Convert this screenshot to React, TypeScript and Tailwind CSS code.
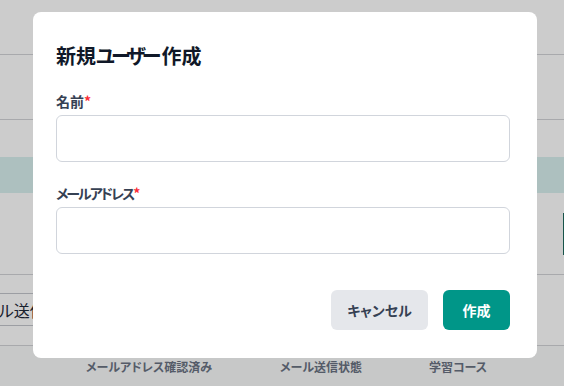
import React from 'react';

const FONT = "font-['Noto_Sans_CJK_JP','Noto_Sans',sans-serif] [font-feature-settings:'palt']";

function Field({ label, className = '', labelClass = '' }: { label: string; className?: string; labelClass?: string }) {
  return (
    <div className={className}>
      <label className="mb-1 block text-sm leading-5 font-semibold text-gray-700">
        <span className={labelClass}>{label}</span>
        <span className="text-red-500">*</span>
      </label>
      <input
        type="text"
        className="block h-[47px] w-full rounded-md border border-gray-300 bg-white px-3 text-sm outline-none"
      />
    </div>
  );
}

export default function App() {
  return (
    <div className={`relative h-[386px] w-[564px] overflow-hidden bg-white ${FONT}`}>
      {/* page behind the dialog */}
      <div className="h-[55px] border-b border-[#d3d4d8]" />
      <div className="h-[65px] border-b border-[#d3d4d8]" />
      <div className="h-[37px]" />
      <div className="h-[36px] bg-[#d9f0ef]" />
      <div className="flex h-[81px] items-start justify-end pt-[20px]">
        <div className="h-[42px] w-px bg-[#1f6a5d]" />
      </div>
      <div className="h-px bg-[#d3d4d8]" />
      <div className="h-[70px] pt-[18px]">
        <button className="-ml-[44px] h-[33px] rounded border border-[#c4c6cc] bg-white px-3 text-base leading-none text-gray-800">
          メール送信
        </button>
      </div>
      <div className="flex h-[41px] items-center border-t border-[#d3d4d8] bg-gray-50 pl-[86px] pt-[2px] text-xs font-semibold text-gray-500">
        <span className="w-[194px]">メールアドレス確認済み</span>
        <span className="w-[149px]">メール送信状態</span>
        <span>学習コース</span>
      </div>

      {/* overlay */}
      <div className="absolute inset-0 bg-black/20" />

      {/* dialog */}
      <div className="absolute top-[12px] left-[33px] flex h-[346px] w-[504px] flex-col rounded-lg bg-white pt-[30px] pr-[27px] pl-[23px]">
        <h2 className="mb-[21px] text-xl leading-7 font-bold text-gray-900">
          新規<span className="tracking-[-4px]">ユーザ</span>ー作成
        </h2>
        <Field label="名前" />
        <Field label="メールアドレス" labelClass="tracking-[-2px]" className="mt-[21px]" />
        <div className="mt-[36px] flex justify-end gap-[15px]">
          <button className="h-10 w-[97px] rounded-md bg-gray-200 text-sm font-semibold text-gray-700">
            キャンセル
          </button>
          <button className="h-10 w-[67px] rounded-md bg-[#009688] text-sm font-semibold text-white">
            作成
          </button>
        </div>
      </div>
    </div>
  );
}
